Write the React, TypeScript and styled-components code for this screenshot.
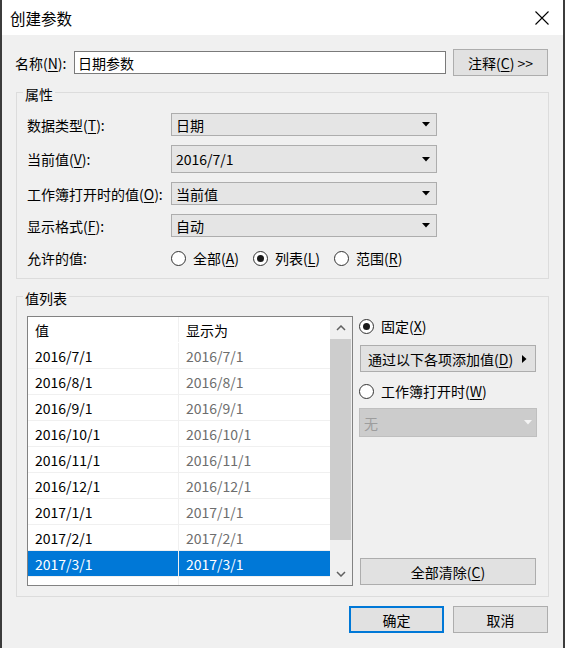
import styled, { createGlobalStyle, css } from "styled-components";

const GlobalStyle = createGlobalStyle`
  html, body {
    margin: 0;
    padding: 0;
    background: #f0f0f0;
  }
  body {
    font-family: "Noto Sans CJK SC", "Noto Sans", sans-serif;
    font-size: 14px;
    color: #000;
  }
  * {
    box-sizing: border-box;
  }
`;

const Window = styled.div`
  width: 565px;
  height: 648px;
  display: flex;
  flex-direction: column;
  background: #f0f0f0;
  border-left: 2px solid #3c3c3c;
  border-right: 2px solid #3c3c3c;
  overflow: hidden;
`;

const TitleBar = styled.div`
  flex: none;
  height: 35px;
  display: flex;
  align-items: center;
  justify-content: space-between;
  padding: 0 14px 0 8px;
  background: #fff;
  font-size: 15.5px;
`;

const Body = styled.div`
  display: flex;
  flex-direction: column;
  padding: 14px 14px 0;
`;

const Key = styled.span`
  text-decoration: underline;
  text-underline-offset: 2px;
`;

const NameRow = styled.div`
  display: flex;
  align-items: center;
  height: 27px;
  margin: 0 1px 0 -1px;
`;

const NameLabel = styled.label`
  flex: none;
  width: 59px;
`;

const TextBox = styled.div`
  flex: 1;
  height: 23px;
  margin-right: 7px;
  padding: 0 3px;
  display: flex;
  align-items: center;
  background: #fff;
  border: 1px solid #7a7a7a;
`;

const Button = styled.button<{ $primary?: boolean }>`
  flex: none;
  width: 95px;
  height: 27px;
  padding: 0;
  font: inherit;
  color: #000;
  background: #e1e1e1;
  border: 1px solid #adadad;
  ${(p) =>
    p.$primary &&
    css`
      border: 2px solid #0078d7;
    `}
`;

const Group = styled.fieldset<{ $top: number; $inset: number; $bottom: number }>`
  min-width: 0;
  margin: ${(p) => p.$top}px 0 0;
  padding: ${(p) => p.$inset}px 10px ${(p) => p.$bottom}px;
  border: 1px solid #dcdcdc;
`;

const GroupTitle = styled.legend`
  margin-left: -4px;
  padding: 4px 2px 0;
  line-height: 18px;
`;

const PropGrid = styled.div`
  display: grid;
  grid-template-columns: 144px 266px;
  grid-template-rows: 23px 28px 23px 23px 24px;
  row-gap: 9px;
  align-items: center;
`;

const Select = styled.div<{ $disabled?: boolean }>`
  height: 100%;
  display: flex;
  align-items: center;
  justify-content: space-between;
  padding: 0 6px 0 4px;
  background: #e5e5e5;
  border: 1px solid #adadad;
  ${(p) =>
    p.$disabled &&
    css`
      background: #cccccc;
      border-color: #bfbfbf;
      color: #9d9d9d;
      padding-right: 4px;
    `}
`;

const RadioRow = styled.div`
  display: flex;
  align-items: center;
  gap: 14px;
`;

const RadioItem = styled.label`
  display: flex;
  align-items: center;
  gap: 7px;
  height: 20px;
`;

const RadioDot = styled.span<{ $checked?: boolean }>`
  flex: none;
  width: 15px;
  height: 15px;
  border-radius: 50%;
  border: 1px solid #333;
  background: #fff;
  display: flex;
  align-items: center;
  justify-content: center;
  &::after {
    content: "";
    width: 7px;
    height: 7px;
    border-radius: 50%;
    background: ${(p) => (p.$checked ? "#1a1a1a" : "transparent")};
  }
`;

const ListArea = styled.div`
  display: flex;
  gap: 6px;
  height: 270px;
`;

const ListView = styled.div`
  flex: none;
  width: 326px;
  display: flex;
  background: #fff;
  border: 1px solid #828282;
  overflow: hidden;
`;

const Rows = styled.div`
  width: 302px;
  flex: none;
  overflow: hidden;
`;

const Row = styled.div<{ $selected?: boolean; $header?: boolean }>`
  display: grid;
  grid-template-columns: 151px 151px;
  height: 26px;
  border-bottom: 1px solid ${(p) => (p.$header ? "#fff" : "#f0f0f0")};
  ${(p) =>
    p.$selected &&
    css`
      background: #0078d7;
      color: #fff;
    `}
`;

const Cell = styled.div<{ $muted?: boolean }>`
  padding: 2px 0 0 7px;
  line-height: 23px;
  white-space: nowrap;
  color: ${(p) => (p.$muted ? "#6d6d6d" : "inherit")};
  &:first-child {
    border-right: 1px solid #f0f0f0;
  }
`;

const ScrollBar = styled.div`
  flex: none;
  width: 22px;
  display: flex;
  flex-direction: column;
  background: #f0f0f0;
`;

const ScrollArrow = styled.div`
  height: 22px;
  flex: none;
  display: flex;
  align-items: center;
  justify-content: center;
  padding-right: 1px;
`;

const ScrollTrack = styled.div`
  flex: 1;
  padding-right: 1px;
`;

const ScrollThumb = styled.div`
  height: 201px;
  background: #cdcdcd;
`;

const SidePanel = styled.div`
  flex: none;
  width: 178px;
  display: flex;
  flex-direction: column;
`;

const SideButton = styled(Button)<{ $gap?: number }>`
  width: auto;
  margin: ${(p) => p.$gap ?? 0}px 1px 0;
  display: flex;
  align-items: center;
  justify-content: space-between;
  padding: 0 8px 0 7px;
`;

const ClearButton = styled(Button)`
  width: auto;
  margin: auto 1px 1px;
`;

const SideCombo = styled(Select)`
  flex: none;
  height: 29px;
  margin-top: 7px;
`;

const SideRadio = styled(RadioItem)<{ $gap?: number }>`
  margin-top: ${(p) => p.$gap ?? 0}px;
`;

const Footer = styled.div`
  display: flex;
  justify-content: flex-end;
  gap: 9px;
  margin: 9px 1px 0 0;
`;

const CloseIcon = () => (
  <svg width="14" height="14" viewBox="0 0 14 14">
    <path d="M0.5 0.5 L13.5 13.5 M13.5 0.5 L0.5 13.5" stroke="#000" strokeWidth="1.1" />
  </svg>
);

const DownTriangle = ({ color = "#000" }: { color?: string }) => (
  <svg width="8" height="5" viewBox="0 0 8 5">
    <polygon points="0,0 8,0 4,4.5" fill={color} />
  </svg>
);

const RightTriangle = () => (
  <svg width="5" height="8" viewBox="0 0 5 8">
    <polygon points="0,0 4.5,4 0,8" fill="#000" />
  </svg>
);

const Chevron = ({ up }: { up?: boolean }) => (
  <svg width="10" height="6" viewBox="0 0 10 6">
    <polyline
      points={up ? "1,5 5,1 9,5" : "1,1 5,5 9,1"}
      fill="none"
      stroke="#606060"
      strokeWidth="1.5"
    />
  </svg>
);

const values = [
  "2016/7/1",
  "2016/8/1",
  "2016/9/1",
  "2016/10/1",
  "2016/11/1",
  "2016/12/1",
  "2017/1/1",
  "2017/2/1",
  "2017/3/1",
];

export default function App() {
  return (
    <>
      <GlobalStyle />
      <Window>
        <TitleBar>
          <span>创建参数</span>
          <CloseIcon />
        </TitleBar>
        <Body>
          <NameRow>
            <NameLabel>
              名称(<Key>N</Key>):
            </NameLabel>
            <TextBox>日期参数</TextBox>
            <Button>
              注释(<Key>C</Key>) &gt;&gt;
            </Button>
          </NameRow>

          <Group $top={5} $inset={10} $bottom={8}>
            <GroupTitle>属性</GroupTitle>
            <PropGrid>
              <span>
                数据类型(<Key>T</Key>):
              </span>
              <Select>
                日期
                <DownTriangle />
              </Select>
              <span>
                当前值(<Key>V</Key>):
              </span>
              <Select>
                2016/7/1
                <DownTriangle />
              </Select>
              <span>
                工作簿打开时的值(<Key>O</Key>):
              </span>
              <Select>
                当前值
                <DownTriangle />
              </Select>
              <span>
                显示格式(<Key>F</Key>):
              </span>
              <Select>
                自动
                <DownTriangle />
              </Select>
              <span>允许的值:</span>
              <RadioRow>
                <RadioItem>
                  <RadioDot />
                  <span>
                    全部(<Key>A</Key>)
                  </span>
                </RadioItem>
                <RadioItem>
                  <RadioDot $checked />
                  <span>
                    列表(<Key>L</Key>)
                  </span>
                </RadioItem>
                <RadioItem>
                  <RadioDot />
                  <span>
                    范围(<Key>R</Key>)
                  </span>
                </RadioItem>
              </RadioRow>
            </PropGrid>
          </Group>

          <Group $top={6} $inset={9} $bottom={10}>
            <GroupTitle>值列表</GroupTitle>
            <ListArea>
              <ListView>
                <Rows>
                  <Row $header>
                    <Cell>值</Cell>
                    <Cell>显示为</Cell>
                  </Row>
                  {values.map((v, i) => {
                    const selected = i === values.length - 1;
                    return (
                      <Row key={v} $selected={selected}>
                        <Cell>{v}</Cell>
                        <Cell $muted={!selected}>{v}</Cell>
                      </Row>
                    );
                  })}
                  <Row>
                    <Cell />
                    <Cell />
                  </Row>
                </Rows>
                <ScrollBar>
                  <ScrollArrow>
                    <Chevron up />
                  </ScrollArrow>
                  <ScrollTrack>
                    <ScrollThumb />
                  </ScrollTrack>
                  <ScrollArrow>
                    <Chevron />
                  </ScrollArrow>
                </ScrollBar>
              </ListView>

              <SidePanel>
                <SideRadio>
                  <RadioDot $checked />
                  <span>
                    固定(<Key>X</Key>)
                  </span>
                </SideRadio>
                <SideButton $gap={9}>
                  <span>
                    通过以下各项添加值(<Key>D</Key>)
                  </span>
                  <RightTriangle />
                </SideButton>
                <SideRadio $gap={9}>
                  <RadioDot />
                  <span>
                    工作簿打开时(<Key>W</Key>)
                  </span>
                </SideRadio>
                <SideCombo $disabled>
                  无
                  <DownTriangle color="#f4f4f4" />
                </SideCombo>
                <ClearButton>
                  全部清除(<Key>C</Key>)
                </ClearButton>
              </SidePanel>
            </ListArea>
          </Group>

          <Footer>
            <Button $primary>确定</Button>
            <Button>取消</Button>
          </Footer>
        </Body>
      </Window>
    </>
  );
}
